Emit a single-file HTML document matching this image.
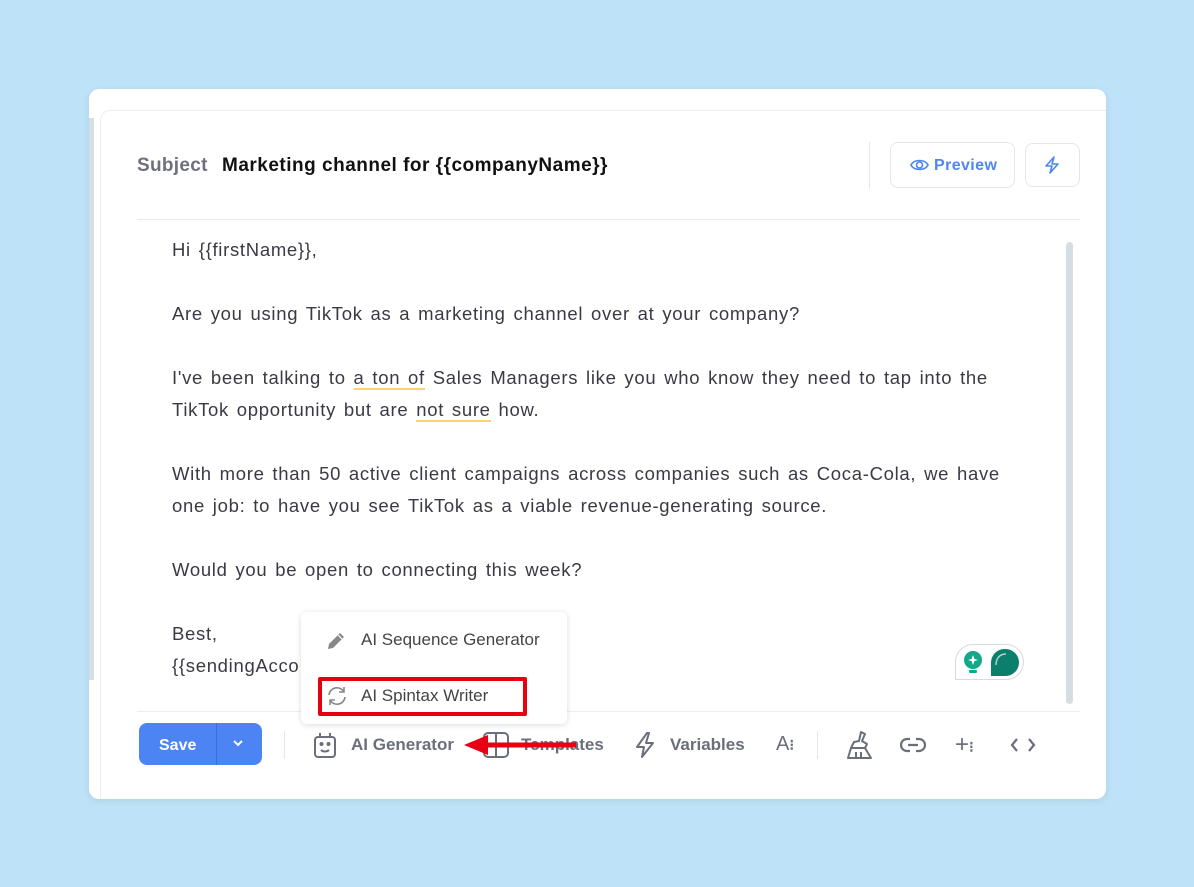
<!DOCTYPE html>
<html><head><meta charset="utf-8"><style>
*{margin:0;padding:0;box-sizing:border-box}
body{width:1194px;height:887px;background:#bee2f7;font-family:"Liberation Sans",sans-serif;position:relative;overflow:hidden}
.a{position:absolute}
.card{left:89px;top:89px;width:1017px;height:710px;background:#fff;border-radius:10px;box-shadow:0 2px 8px rgba(0,0,0,.08)}
.inner{left:100px;top:110px;width:1006px;height:689px;border:1px solid #ececf2;border-right:none;border-bottom:none;border-radius:10px 0 0 0}
.body p{font-size:18.5px;color:#3a3a44;line-height:32px;position:absolute;left:172px;white-space:nowrap;letter-spacing:0.7px;word-spacing:2px}
.u{border-bottom:2px solid #f6d36b}
.tb{font-size:17px;color:#6b6f7b;font-weight:bold;position:absolute;top:735px}
</style></head><body>
<div class="a card"></div>
<div class="a" style="left:89px;top:118px;width:5px;height:562px;background:#d6dde3"></div>
<div class="a inner"></div>
<div class="a" style="left:137px;top:155px;font-size:19px;color:#6e7080;font-weight:bold;letter-spacing:0.3px">Subject</div>
<div class="a" style="left:222px;top:155px;font-size:19px;color:#111;font-weight:bold;letter-spacing:0.5px">Marketing channel for {{companyName}}</div>
<div class="a" style="left:869px;top:142px;width:1px;height:47px;background:#e6e6ec"></div>
<div class="a" style="left:890px;top:142px;width:125px;height:46px;border:1px solid #e5e5f0;border-radius:8px;color:#4f86f2;font-weight:bold;font-size:16px;padding:14px 0 0 43px;letter-spacing:0.4px">Preview</div>
<svg class="a" style="left:910px;top:157px" width="19" height="16" viewBox="0 0 19 16" fill="none" stroke="#4f86f2" stroke-width="1.6"><path d="M1 8C4 2 15 2 18 8C15 14 4 14 1 8Z"/><circle cx="9.5" cy="8" r="3"/></svg>
<div class="a" style="left:1025px;top:143px;width:55px;height:44px;border:1px solid #e5e5f0;border-radius:8px"></div>
<svg class="a" style="left:1044px;top:156px" width="17" height="18" viewBox="0 0 17 18" fill="none" stroke="#4f86f2" stroke-width="1.6" stroke-linejoin="round"><path d="M10 1L2 10H8L6 17L14 8H8Z"/></svg>
<div class="a" style="left:137px;top:219px;width:943px;height:1px;background:#e8e8ee"></div>
<div class="a" style="left:1066px;top:242px;width:7px;height:462px;background:#d6dde2;border-radius:4px"></div>
<div class="body">
<p style="top:234px">Hi {{firstName}},</p>
<p style="top:298px">Are you using TikTok as a marketing channel over at your company?</p>
<p style="top:362px">I've been talking to <span class="u">a ton of</span> Sales Managers like you who know they need to tap into the</p>
<p style="top:394px">TikTok opportunity but are <span class="u">not sure</span> how.</p>
<p style="top:458px">With more than 50 active client campaigns across companies such as Coca-Cola, we have</p>
<p style="top:490px">one job: to have you see TikTok as a viable revenue-generating source.</p>
<p style="top:554px">Would you be open to connecting this week?</p>
<p style="top:618px">Best,</p>
<p style="top:650px">{{sendingAcco</p>
</div>
<div class="a" style="left:955px;top:644px;width:69px;height:36px;border:1px solid #d8d8e0;border-radius:18px 18px 18px 0;background:#fff"></div>
<svg class="a" style="left:962px;top:650px" width="22" height="26" viewBox="0 0 22 26"><circle cx="11" cy="10" r="9" fill="#14a88a"/><path d="M11 5L12.5 9L16 10L12.5 11L11 15L9.5 11L6 10L9.5 9Z" fill="#fff"/><rect x="7" y="20" width="8" height="3" rx="1" fill="#14a88a"/></svg>
<div class="a" style="left:991px;top:649px;width:28px;height:27px;background:#0b7f6b;border-radius:14px 14px 14px 0"></div>
<svg class="a" style="left:991px;top:649px" width="28" height="27"><path d="M5 16C5 9 9 5 15 5" stroke="#fff" stroke-width="1.4" fill="none" opacity=".7"/></svg>
<div class="a" style="left:137px;top:711px;width:943px;height:1px;background:#ececf1"></div>
<div class="a" style="left:139px;top:723px;width:123px;height:42px;background:#4c84f3;border-radius:8px"></div>
<div class="a" style="left:216px;top:723px;width:1px;height:42px;background:#3a6fd8"></div>
<div class="a" style="left:159px;top:737px;color:#fff;font-weight:bold;font-size:16px">Save</div>
<svg class="a" style="left:232px;top:739px" width="12" height="8"><path d="M2 2L6 6L10 2" stroke="#fff" stroke-width="2" fill="none"/></svg>
<div class="a" style="left:284px;top:731px;width:1px;height:28px;background:#e6e6ea"></div>
<svg class="a" style="left:313px;top:732px" width="24" height="27" viewBox="0 0 24 27" fill="none" stroke="#6b6f7b" stroke-width="2"><rect x="2" y="5" width="20" height="20" rx="3"/><path d="M7 1V6M17 1V6M8 18C10 20 14 20 16 18"/><circle cx="8.5" cy="12" r="1" fill="#6b6f7b"/><circle cx="15.5" cy="12" r="1" fill="#6b6f7b"/></svg>
<div class="tb" style="left:351px">AI Generator</div>
<svg class="a" style="left:482px;top:731px" width="28" height="28" fill="none" stroke="#6b6f7b" stroke-width="2"><rect x="2" y="2" width="24" height="24" rx="4"/><path d="M14 2V26"/></svg>
<div class="tb" style="left:521px">Templates</div>
<svg class="a" style="left:464px;top:734px" width="112" height="22"><path d="M20 11H112" stroke="#e60012" stroke-width="5"/><path d="M0 11L24 1V21Z" fill="#e60012"/></svg>
<svg class="a" style="left:634px;top:731px" width="22" height="28" fill="none" stroke="#6b6f7b" stroke-width="2" stroke-linejoin="round"><path d="M13 2L3 16H10L8 26L19 12H12L15 2Z"/></svg>
<div class="tb" style="left:670px">Variables</div>
<div class="tb" style="left:776px;font-size:20px;top:733px;font-weight:normal">A<span style="font-size:15px;font-weight:bold">⁝</span></div>
<div class="a" style="left:817px;top:731px;width:1px;height:28px;background:#e6e6ea"></div>
<svg class="a" style="left:845px;top:730px" width="28" height="30" fill="none" stroke="#6b6f7b" stroke-width="2" stroke-linejoin="round"><path d="M16 2L20 4L17 11L22 14L20 18H6L9 12L14 11Z"/><path d="M6 18L3 28H26L20 18"/><path d="M11 22V28M16 22V28"/></svg>
<svg class="a" style="left:900px;top:737px" width="26" height="16" fill="none" stroke="#6b6f7b" stroke-width="2.2"><path d="M10 2H7A6 6 0 0 0 7 14H10M16 2H19A6 6 0 0 1 19 14H16M8 8H18"/></svg>
<div class="tb" style="left:955px;font-size:24px;top:731px;font-weight:normal">+<span style="font-size:15px;font-weight:bold">⁝</span></div>
<svg class="a" style="left:1010px;top:737px" width="26" height="16" fill="none" stroke="#6b6f7b" stroke-width="2.2"><path d="M7 2L2 8L7 14M19 2L24 8L19 14"/></svg>
<div class="a" style="left:301px;top:612px;width:266px;height:112px;background:#fff;border-radius:6px;box-shadow:0 1px 6px rgba(0,0,0,.15)"></div>
<svg class="a" style="left:325px;top:630px" width="22" height="22"><path d="M3 19L4 14L15 3L19 7L8 18Z" fill="#888"/><path d="M13 5L17 9" stroke="#fff" stroke-width="1.2"/></svg>
<div class="a" style="left:361px;top:630px;font-size:17px;color:#444">AI Sequence Generator</div>
<div class="a" style="left:318px;top:677px;width:209px;height:39px;border:4px solid #e60012;border-radius:2px"></div>
<svg class="a" style="left:326px;top:686px" width="22" height="20" fill="none" stroke="#888" stroke-width="1.6"><path d="M3 9A8 8 0 0 1 18 6M19 11A8 8 0 0 1 4 14M18 1V6H13M4 19V14H9"/></svg>
<div class="a" style="left:361px;top:686px;font-size:17px;color:#444">AI Spintax Writer</div>
</body></html>
